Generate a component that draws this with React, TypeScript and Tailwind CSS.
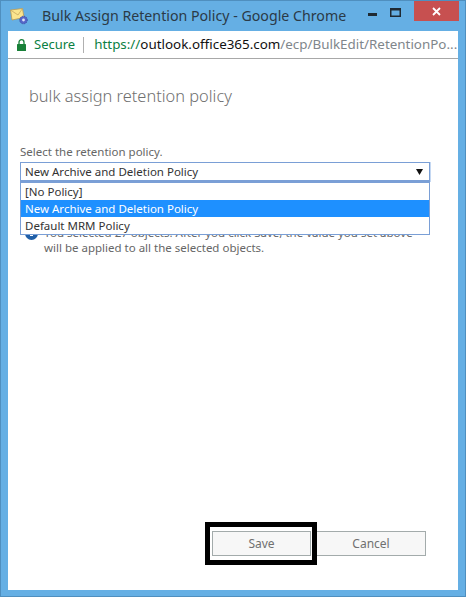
export default function App() {
  const font = { fontFamily: '"Noto Sans", "Open Sans", sans-serif' };
  return (
    <div style={font} className="relative flex h-[597px] w-[466px] flex-col overflow-hidden border border-[#4f8fbf] bg-[#65afe4] px-[7px] pb-[6px] text-[#444]">
      <div className="relative flex h-[30px] shrink-0 items-center">
        <svg className="absolute left-[2px] top-[7px]" width="18" height="17" viewBox="0 0 18 17">
          <path d="M0.5 2 L12.5 0.5 L14 9.5 L2 12 Z" fill="#fbe58e" stroke="#b99a55" strokeWidth="0.8" />
          <path d="M0.5 2 L8 7 L12.5 0.5" fill="none" stroke="#c9a860" strokeWidth="0.8" />
          <circle cx="13.5" cy="12" r="3.8" fill="#5566c8" stroke="#3a4aa0" strokeDasharray="1 1" />
          <circle cx="13.5" cy="12" r="1.4" fill="#dfe4fa" />
        </svg>
        <span className="ml-[34px] whitespace-nowrap text-[14.2px] leading-none text-[#2b3a47]">Bulk Assign Retention Policy - Google Chrome</span>
        <div className="absolute right-[-1px] top-0 flex items-start">
          <svg className="mr-[13px] mt-[12px]" width="9" height="3" viewBox="0 0 9 3"><rect width="9" height="3" fill="#1f2a33" /></svg>
          <svg className="mr-[13px] mt-[7px]" width="11" height="9" viewBox="0 0 11 9"><rect x="0.75" y="0.75" width="9.5" height="7.5" fill="none" stroke="#1f2a33" strokeWidth="1.5" /><rect y="0" width="11" height="2.5" fill="#1f2a33" /></svg>
          <div className="flex h-[20px] w-[45px] items-center justify-center bg-[#c75050]">
            <svg width="9" height="9" viewBox="0 0 9 9"><path d="M1 1 L8 8 M8 1 L1 8" stroke="#fff" strokeWidth="1.8" /></svg>
          </div>
        </div>
      </div>
      <div className="flex h-[28px] shrink-0 items-center border-b border-[#a8a8a8] bg-white text-[13.4px]">
        <svg className="ml-[9px]" width="9" height="12" viewBox="0 0 9 12">
          <path d="M2 5.5 V3.2 a2.5 2.5 0 0 1 5 0 V5.5" fill="none" stroke="#188038" strokeWidth="1.3" />
          <rect y="5" width="9" height="7" rx="0.6" fill="#188038" />
        </svg>
        <span className="ml-[8px] text-[13px] text-[#0b8043]">Secure</span>
        <span className="ml-[8px] h-[16px] w-px bg-[#b0b0b0]" />
        <span className="ml-[10px] whitespace-nowrap">
          <span className="text-[#0b8043]">https://</span>
          <span className="text-[#111]">outlook.office365.com</span>
          <span className="text-[#80868b]">/ecp/BulkEdit/RetentionPo...</span>
        </span>
      </div>
      <div className="relative flex min-h-0 flex-1 flex-col bg-white pl-[12px] pr-[28px]">
        <h1 className="mt-[26px] pl-[9px] text-[16.4px] font-light leading-[22px] text-[#6f6f6f]">bulk assign retention policy</h1>
        <label className="mt-[37px] text-[11.5px] leading-[16px] text-[#666]">Select the retention policy.</label>
        <div className="relative mt-[2px] w-[410px]">
          <div className="flex h-[20px] items-center justify-between border border-b-2 border-[#7a9fd6] pl-[4px] pr-[6px] pt-[1px] text-[11.5px] text-[#333] shadow-[1px_0_0_#c5d8f2]">
            <span>New Archive and Deletion Policy</span>
            <svg width="7" height="6" viewBox="0 0 7 6"><path d="M0 0 H7 L3.5 6 Z" fill="#111" /></svg>
          </div>
          <div className="absolute left-0 top-[20px] z-10 w-[410px] border border-[#7a9fd6] bg-white text-[11.5px] text-[#333]">
            <div className="flex h-[17px] items-center pl-[4px]">[No Policy]</div>
            <div className="flex h-[17px] items-center bg-[#1e90ff] pl-[4px] text-white">New Archive and Deletion Policy</div>
            <div className="flex h-[17px] items-center pl-[4px]">Default MRM Policy</div>
          </div>
          <div className="relative mt-[43px] flex gap-[6px] pl-[5px] text-[11.5px] leading-[15px] text-[#666]">
            <span className="mt-[2px] flex h-[13px] w-[13px] shrink-0 items-center justify-center overflow-hidden rounded-full bg-[#1f5fa8]">
              <span className="h-[5px] w-[3px] bg-white" />
            </span>
            <p className="w-[375px]">You selected 27 objects. After you click Save, the value you set above will be applied to all the selected objects.</p>
          </div>
        </div>
        <div className="mt-auto mb-[34px] flex justify-end gap-[5px] pr-[4px] text-[12px] text-[#707070]">
          <button className="h-[25px] w-[99px] border border-[#a3abab] bg-[#f7f7f7]">Save</button>
          <button className="h-[25px] w-[110px] border border-[#a3abab] bg-[#f7f7f7]">Cancel</button>
        </div>
      </div>
      <div className="absolute left-[204px] top-[521px] h-[43px] w-[112px] border-[5px] border-black" />
    </div>
  );
}
